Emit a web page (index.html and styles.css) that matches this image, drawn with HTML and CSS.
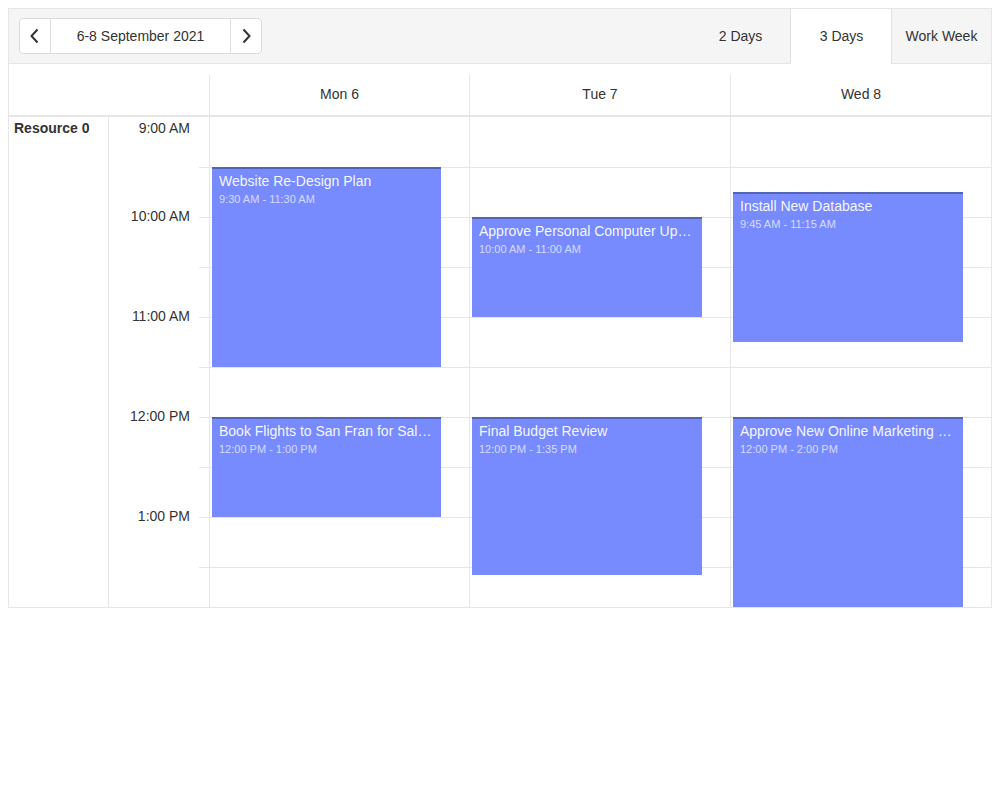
FILE: index.html
```html
<!DOCTYPE html>
<html>
<head>
<meta charset="utf-8">
<link rel="stylesheet" href="styles.css">
</head>
<body>
<div class="scheduler">
  <div class="toolbar">
    <div class="nav">
      <button class="nav-btn" aria-label="Previous">
        <svg width="12" height="16" viewBox="0 0 12 16"><path d="M8.5 1.5 L2.5 8 L8.5 14.5" fill="none" stroke="#333" stroke-width="2"/></svg>
      </button>
      <div class="nav-date">6-8 September 2021</div>
      <button class="nav-btn" aria-label="Next">
        <svg width="12" height="16" viewBox="0 0 12 16"><path d="M3.5 1.5 L9.5 8 L3.5 14.5" fill="none" stroke="#333" stroke-width="2"/></svg>
      </button>
    </div>
    <div class="tabs">
      <div class="tab">2 Days</div>
      <div class="tab selected">3 Days</div>
      <div class="tab last">Work Week</div>
    </div>
  </div>

  <div class="header">
    <div class="hcell blank"></div>
    <div class="hcell blank"></div>
    <div class="hcell day">Mon 6</div>
    <div class="hcell day">Tue 7</div>
    <div class="hcell day">Wed 8</div>
  </div>

  <div class="body">
    <div class="resource">Resource 0</div>
    <div class="times">
      <div class="tslot"><span class="tlabel first">9:00 AM</span></div>
      <div class="tslot tick"></div>
      <div class="tslot tick"><span class="tlabel">10:00 AM</span></div>
      <div class="tslot tick"></div>
      <div class="tslot tick"><span class="tlabel">11:00 AM</span></div>
      <div class="tslot tick"></div>
      <div class="tslot tick"><span class="tlabel">12:00 PM</span></div>
      <div class="tslot tick"></div>
      <div class="tslot tick"><span class="tlabel">1:00 PM</span></div>
      <div class="tslot tick"></div>
    </div>
    <div class="daycol">
      <div class="slot"></div><div class="slot"></div><div class="slot"></div><div class="slot"></div>
      <div class="slot"></div><div class="slot"></div><div class="slot"></div><div class="slot"></div>
      <div class="slot"></div><div class="slot"></div>
      <div class="event" style="top:50px;height:200px">
        <div class="ev-title">Website Re-Design Plan</div>
        <div class="ev-time">9:30 AM - 11:30 AM</div>
      </div>
      <div class="event" style="top:300px;height:100px">
        <div class="ev-title">Book Flights to San Fran for Sales Trip</div>
        <div class="ev-time">12:00 PM - 1:00 PM</div>
      </div>
    </div>
    <div class="daycol">
      <div class="slot"></div><div class="slot"></div><div class="slot"></div><div class="slot"></div>
      <div class="slot"></div><div class="slot"></div><div class="slot"></div><div class="slot"></div>
      <div class="slot"></div><div class="slot"></div>
      <div class="event" style="top:100px;height:100px">
        <div class="ev-title">Approve Personal Computer Upgrade Plan</div>
        <div class="ev-time">10:00 AM - 11:00 AM</div>
      </div>
      <div class="event" style="top:300px;height:158px">
        <div class="ev-title">Final Budget Review</div>
        <div class="ev-time">12:00 PM - 1:35 PM</div>
      </div>
    </div>
    <div class="daycol">
      <div class="slot"></div><div class="slot"></div><div class="slot"></div><div class="slot"></div>
      <div class="slot"></div><div class="slot"></div><div class="slot"></div><div class="slot"></div>
      <div class="slot"></div><div class="slot"></div>
      <div class="event" style="top:75px;height:150px">
        <div class="ev-title">Install New Database</div>
        <div class="ev-time">9:45 AM - 11:15 AM</div>
      </div>
      <div class="event" style="top:300px;height:190px">
        <div class="ev-title">Approve New Online Marketing Strategy</div>
        <div class="ev-time">12:00 PM - 2:00 PM</div>
      </div>
    </div>
  </div>
</div>
</body>
</html>
```
FILE: styles.css
```css
* { box-sizing: border-box; }

body {
  margin: 8px;
  font-family: "Liberation Sans", Arial, sans-serif;
  font-size: 14px;
  color: #333;
  background: #fff;
}

.scheduler {
  width: 984px;
  border: 1px solid #e6e6e6;
}

.toolbar {
  height: 55px;
  background: #f5f5f5;
  border-bottom: 1px solid #e6e6e6;
  display: flex;
  align-items: center;
  justify-content: space-between;
  padding-left: 10px;
}

.nav {
  display: flex;
  height: 36px;
  border: 1px solid #dcdcdc;
  border-radius: 4px;
  background: #fff;
}

.nav-btn {
  width: 30px;
  height: 34px;
  border: none;
  background: transparent;
  padding: 0;
  display: flex;
  align-items: center;
  justify-content: center;
  cursor: pointer;
}

.nav-date {
  width: 181px;
  border-left: 1px solid #e0e0e0;
  border-right: 1px solid #e0e0e0;
  display: flex;
  align-items: center;
  justify-content: center;
  font-size: 14px;
  color: #333;
}

.tabs {
  display: flex;
  align-self: stretch;
  margin-bottom: -1px;
}

.tab {
  width: 100px;
  display: flex;
  align-items: center;
  justify-content: center;
  padding-bottom: 1px;
  padding-left: 1px;
  color: #333;
}

.tab.selected {
  width: 102px;
  background: #fff;
  border-left: 1px solid #e0e0e0;
  border-right: 1px solid #e0e0e0;
}

.tab.last {
  width: 99px;
  padding-left: 0;
}

.header {
  display: grid;
  grid-template-columns: 100px 100px 260px 261px 1fr;
  padding-top: 11px;
  border-bottom: 2px solid #e6e6e6;
}

.hcell {
  height: 40px;
}

.hcell.day {
  border-left: 1px solid #e6e6e6;
  display: flex;
  align-items: center;
  justify-content: center;
  padding-bottom: 2px;
}

.body {
  display: grid;
  grid-template-columns: 100px 100px 260px 261px 1fr;
  height: 490px;
  overflow: hidden;
}

.resource {
  border-right: 1px solid #e6e6e6;
  font-weight: bold;
  padding: 3px 5px;
  line-height: 16px;
}

.times {
  display: flex;
  flex-direction: column;
}

.tslot {
  height: 50px;
  flex: none;
  text-align: right;
  padding-right: 19px;
}

.tslot.tick {
  background: linear-gradient(#e6e6e6, #e6e6e6) right top / 10px 1px no-repeat;
}

.tlabel {
  display: block;
  line-height: 22px;
  margin-top: -12px;
}

.tlabel.first {
  margin-top: 0;
}

.daycol {
  position: relative;
  border-left: 1px solid #e6e6e6;
  display: flex;
  flex-direction: column;
}

.slot {
  height: 50px;
  flex: none;
  border-top: 1px solid #e6e6e6;
}

.slot:first-child {
  border-top: none;
}

.event {
  position: absolute;
  left: 2px;
  right: 28px;
  background: rgba(104, 126, 255, 0.9);
  border-top: 2px solid #5464b4;
  padding: 2px 7px;
  color: #fff;
  overflow: hidden;
}

.ev-title {
  font-size: 14px;
  line-height: 20px;
  white-space: nowrap;
  overflow: hidden;
  text-overflow: ellipsis;
  color: rgba(255, 255, 255, 0.95);
}

.ev-time {
  font-size: 11px;
  line-height: 16px;
  color: rgba(255, 255, 255, 0.7);
  white-space: nowrap;
}
```
